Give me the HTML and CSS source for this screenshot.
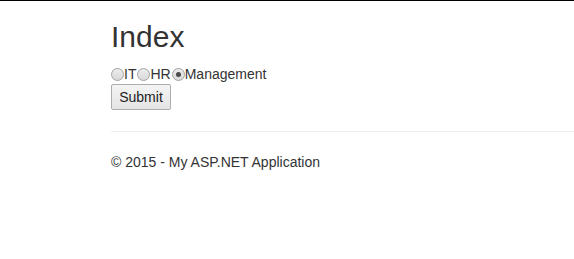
FILE: index.html
```html
<!DOCTYPE html>
<html>
<head>
<meta charset="utf-8">
<title>Index - My ASP.NET Application</title>
<link rel="stylesheet" href="styles.css">
</head>
<body>
<div class="topbar"></div>
<div class="container body-content">
  <h2 class="title">Index</h2>
  <form class="form">
    <div class="choices"><input type="radio" name="dept" value="IT" class="radio"><span class="opt">IT</span><input type="radio" name="dept" value="HR" class="radio"><span class="opt">HR</span><input type="radio" name="dept" value="Management" class="radio" checked><span class="opt">Management</span></div>
    <button type="button" class="btn">Submit</button>
  </form>
  <hr class="rule">
  <footer class="footer">
    <p class="copy">&copy; 2015 - My ASP.NET Application</p>
  </footer>
</div>
</body>
</html>
```

FILE: styles.css
```css
body {
  margin: 0;
  font-family: "Liberation Sans", Arial, sans-serif;
  font-size: 14px;
  line-height: 20px;
  color: #333;
  background: #fff;
}
.topbar {
  height: 1px;
  background: #000;
}
.container {
  margin-left: 96px;
  padding: 19px 0 0 15px;
}
.title {
  margin: 0 0 11px 0;
  font-size: 30px;
  font-weight: 500;
  line-height: 33px;
  color: #333;
}
.form {
  margin: 0;
}
.choices {
  display: flex;
  align-items: flex-start;
  height: 20px;
}
.opt {
  display: block;
  line-height: 20px;
  margin-right: 1px;
}
.radio {
  appearance: none;
  -webkit-appearance: none;
  box-sizing: border-box;
  width: 13px;
  height: 13px;
  margin: 4px 0 0 0;
  border: 1px solid #a3a3a3;
  border-radius: 50%;
  background: linear-gradient(#ececec, #d9d9d9);
  display: block;
  position: relative;
}
.radio:checked::after {
  content: "";
  position: absolute;
  left: 3px;
  top: 3px;
  width: 5px;
  height: 5px;
  border-radius: 50%;
  background: #4a4a4a;
}
.btn {
  display: block;
  box-sizing: border-box;
  height: 26px;
  width: 60px;
  margin: 0;
  padding: 0;
  font: inherit;
  line-height: 20px;
  color: #222;
  border: 1px solid #adadad;
  border-radius: 2px;
  background: linear-gradient(#f4f4f4, #e4e4e4);
}
.rule {
  margin: 21px 0 20px 0;
  border: 0;
  border-top: 1px solid #eee;
  height: 0;
}
.footer {
  margin: 0;
}
.copy {
  margin: 0;
}
```
